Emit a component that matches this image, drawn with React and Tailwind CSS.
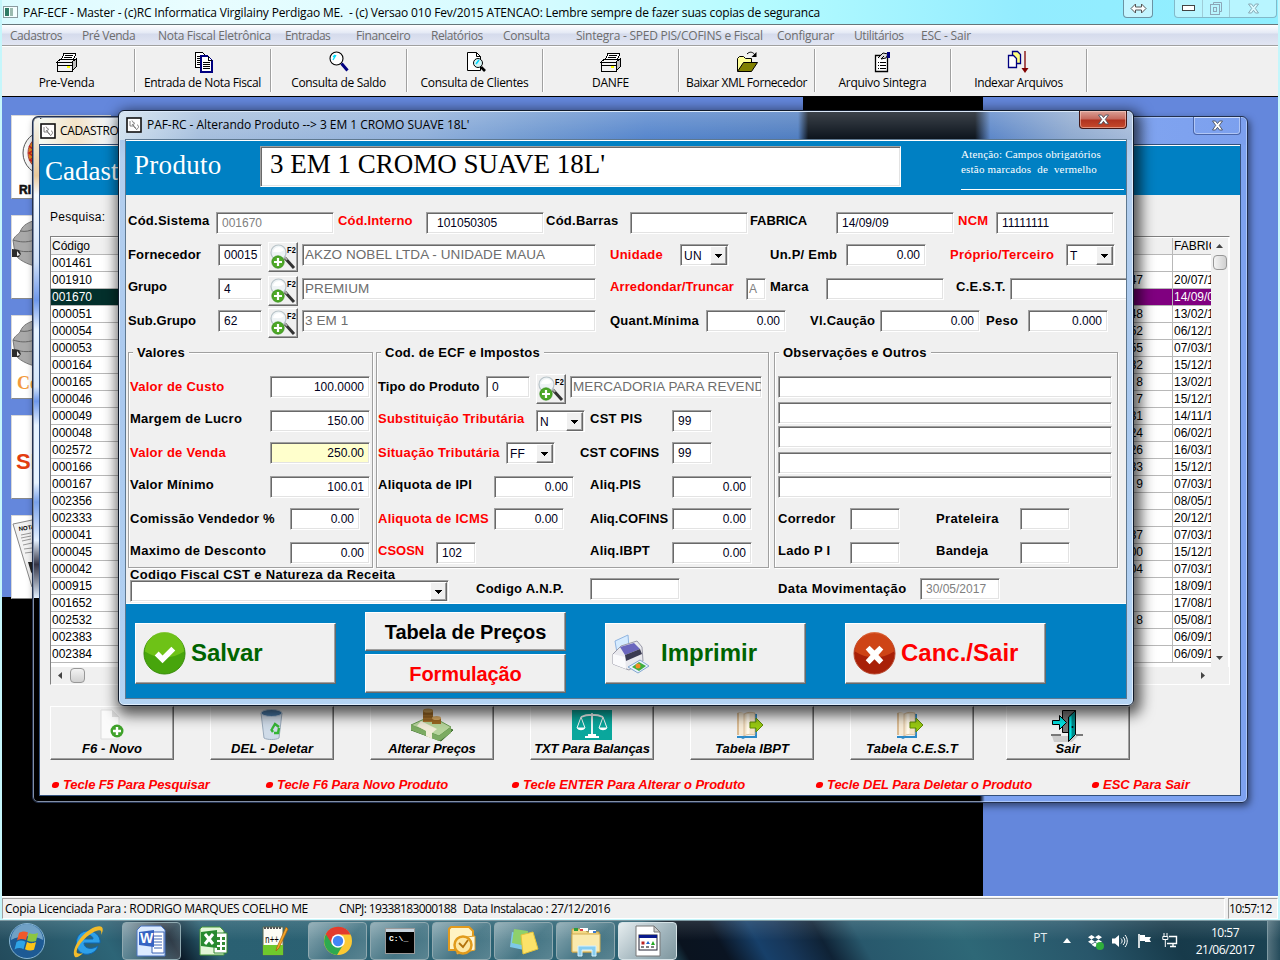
import React from "react";
import { FaDropbox } from "react-icons/fa";

const SEGOE = "font-['Open_Sans','Noto_Sans',sans-serif]";
const RAISED =
  "bg-[#f0f0f0] border border-t-white border-l-white border-r-[#696969] border-b-[#696969] shadow-[inset_-1px_-1px_0_#a0a0a0]";
const SUNKEN =
  "bg-white border border-t-[#a0a0a0] border-l-[#a0a0a0] border-r-white border-b-white shadow-[inset_1px_1px_0_#696969,inset_-1px_-1px_0_#e3e3e3]";

/* ---------- form primitives ---------- */

function Row({ className = "", children }) {
  return <div className={"flex shrink-0 items-start " + className}>{children}</div>;
}

function L({ className = "", red, children }) {
  return (
    <span
      className={
        "block h-[21px] shrink-0 whitespace-nowrap pt-px text-[13px] font-bold leading-5 " +
        (red ? "text-[#ff0000] " : "text-black ") +
        className
      }
    >
      {children}
    </span>
  );
}

function F({ className = "", children, right, off, big, yellow }) {
  return (
    <div
      className={
        "h-[22px] shrink-0 overflow-hidden whitespace-nowrap leading-5 " +
        SUNKEN +
        " " +
        (yellow ? "bg-[#ffffcc]! " : "") +
        (big ? "text-[13.5px] tracking-[0.08px] text-[#6d6d6d] pl-0.5 " : "text-[12px] tracking-normal ") +
        (right ? "pr-[5px] text-right " : big ? "" : "pl-[5px] ") +
        (off ? "text-[#808080] " : big ? "" : "text-[#000020] ") +
        className
      }
    >
      {children}
    </div>
  );
}

function Arrow() {
  return (
    <span className={"flex h-[19px] w-[17px] shrink-0 items-center justify-center " + RAISED}>
      <svg width="7" height="4" shapeRendering="crispEdges">
        <path d="M0 0h7L3.5 4z" fill="#000" />
      </svg>
    </span>
  );
}

function Select({ className = "", children }) {
  return (
    <div className={"flex h-[22px] shrink-0 justify-between p-px pl-[3px] text-[12px] leading-[21px] text-[#000020] " + SUNKEN + " " + className}>
      <span>{children}</span>
      <Arrow />
    </div>
  );
}

function Lookup({ className = "" }) {
  return (
    <div className={"relative h-[30px] w-[30px] shrink-0 " + RAISED + " " + className}>
      <svg width="28" height="28" viewBox="0 0 28 28">
        <path d="M16 15l9 10" stroke="#333" strokeWidth="3" />
        <path d="M15 13l3 4" stroke="#aaa" strokeWidth="2" />
        <circle cx="9.500" cy="9.500" r="7.500" fill="#eef3f5" stroke="#b9c4c9" strokeWidth="1.200" />
        <path d="M4 9a6 6 0 0 1 11-2c-3 3-7 2-11 2z" fill="#fff" />
        <circle cx="9" cy="19" r="6.200" fill="#4ea827" stroke="#2f8a14" strokeWidth=".7" />
        <path d="M9 15v8M5 19h8" stroke="#fff" strokeWidth="2.200" />
        <text x="18" y="10" fontSize="9" fontWeight="bold" fontFamily="Liberation Sans" textLength="9" lengthAdjust="spacingAndGlyphs">F2</text>
      </svg>
    </div>
  );
}

function Group({ className = "", title, children }) {
  return (
    <div className={"flex h-[216px] shrink-0 flex-col border border-[#a0a0a0] shadow-[inset_1px_1px_0_#fff,1px_1px_0_#fff] " + className}>
      <div className="-mt-[10px] mb-[13px] ml-1 h-5 w-fit bg-[#f0f0f0] px-1 text-[13px] font-bold leading-5 tracking-[0.25px]">{title}</div>
      {children}
    </div>
  );
}

/* ---------- toolbar pictures ---------- */

function PrinterIcon() {
  return (
    <svg width="22" height="22" viewBox="0 0 22 22" shapeRendering="crispEdges">
      <path d="M8 2h12l-3 8H5z" fill="#fff" stroke="#000" />
      <path d="M9 4h8M8 6h8M7 8h8" stroke="#000" />
      <path d="M1 11h15v9H1zM1 11l4-3h14l-3 3z" fill="#f4f4f4" stroke="#000" />
      <path d="M16 11l4-3v8l-4 4z" fill="#c0c0c0" stroke="#000" />
      <path d="M2 14h14" stroke="#000" />
      <path d="M11 16h3" stroke="#ffff00" strokeWidth="2" />
    </svg>
  );
}
function PagesIcon() {
  return (
    <svg width="22" height="22" viewBox="0 0 22 22" shapeRendering="crispEdges">
      <path d="M3 1h7l3 3v12H3z" fill="#fff" stroke="#000" />
      <path d="M5 5h4M5 7h6M5 9h6M5 11h6M5 13h6" stroke="#000" />
      <path d="M9 5h7l4 4v12H9z" fill="#fff" stroke="#000080" strokeWidth="1.300" />
      <path d="M16 5v4h4M11 11h7M11 13h7M11 15h7M11 17h7" fill="none" stroke="#000" />
    </svg>
  );
}
function GlassIcon() {
  return (
    <svg width="22" height="22" viewBox="0 0 22 22">
      <circle cx="8.500" cy="7.500" r="6.500" fill="#fff" stroke="#000" strokeWidth="1.100" />
      <path d="M5 9l3-5M7 4l-2 2" stroke="#00e0ff" strokeWidth="1.300" />
      <path d="M13.500 12.500l6 7" stroke="#000080" strokeWidth="3" />
    </svg>
  );
}
function PageGlassIcon() {
  return (
    <svg width="22" height="22" viewBox="0 0 22 22">
      <path d="M3.500 1.500h9l4 4v14h-13z" fill="#fff" stroke="#000" />
      <path d="M12.500 1.500v4h4" fill="none" stroke="#000" />
      <circle cx="14" cy="12" r="4.500" fill="#d5f4f4" stroke="#000" />
      <path d="M12 13l3-4" stroke="#00d5ff" strokeWidth="1.500" />
      <path d="M17 16l4 4" stroke="#000" strokeWidth="2.600" />
    </svg>
  );
}
function FolderIcon() {
  return (
    <svg width="24" height="22" viewBox="0 0 24 22">
      <path d="M2.500 20V7.500l2-2h4l2 2h6v4" fill="#ffff99" stroke="#000" />
      <path d="M2.500 20.500l6-9h14l-6 9z" fill="#808000" stroke="#000" />
      <path d="M12 3c3-3 6-2 8 1" fill="none" stroke="#000" />
      <path d="M21.500 1v5h-5z" fill="#000" />
    </svg>
  );
}
function ListIcon() {
  return (
    <svg width="22" height="22" viewBox="0 0 22 22">
      <path d="M3.500 4.500h12v16h-12z" fill="#fff" stroke="#000" strokeWidth="1.300" />
      <path d="M6 11.500h1M8 11.500h6M6 14.500h1M8 14.500h6M6 17.500h1M8 17.500h6" stroke="#000" />
      <path d="M6 7l5-5 5 1-2 4-5 1" fill="#ddd" stroke="#000" />
      <path d="M15 1h3v6h-3z" fill="#000080" />
      <path d="M9 8l3-3" stroke="#000" />
    </svg>
  );
}
function IndexIcon() {
  return (
    <svg width="24" height="24" viewBox="0 0 24 24">
      <path d="M5.500 1.500h5l3 3v9h-8z" fill="#ffff80" stroke="#000080" strokeWidth="1.300" />
      <path d="M1.500 5.500h5l3 3v9h-8z" fill="#fff" stroke="#000080" strokeWidth="1.300" />
      <path d="M18 1v18" stroke="#800000" strokeWidth="1.300" />
      <path d="M14.500 18h7L18 23z" fill="#800000" />
    </svg>
  );
}

const TOOLS = [
  ["Pre-Venda", PrinterIcon, "w-[133px] pr-[3px]", "tracking-[-0.25px]"],
  ["Entrada de Nota Fiscal", PagesIcon, "w-[136px]", "tracking-[-0.36px]"],
  ["Consulta de Saldo", GlassIcon, "w-[136px]", "tracking-[-0.34px]"],
  ["Consulta de Clientes", PageGlassIcon, "w-[136px]", "tracking-[-0.3px]"],
  ["DANFE", PrinterIcon, "w-[136px]", "tracking-[-0.2px]"],
  ["Baixar XML Fornecedor", FolderIcon, "w-[136px]", "tracking-[-0.43px]"],
  ["Arquivo Sintegra", ListIcon, "w-[136px]", "tracking-[-0.3px]"],
  ["Indexar Arquivos", IndexIcon, "w-[136px]", "tracking-[-0.4px]"],
];

const MENU = [
  ["Cadastros", "w-[72px] tracking-[-0.45px]"],
  ["Pré Venda", "w-[76px] tracking-[-0.45px]"],
  ["Nota Fiscal Eletrônica", "w-[127px] tracking-[-0.3px]"],
  ["Entradas", "w-[71px] tracking-[-0.55px]"],
  ["Financeiro", "w-[75px] tracking-[-0.4px]"],
  ["Relatórios", "w-[72px] tracking-[-0.45px]"],
  ["Consulta", "w-[73px] tracking-[-0.3px]"],
  ["Sintegra - SPED PIS/COFINS e Fiscal", "w-[201px] tracking-[-0.25px]"],
  ["Configurar", "w-[77px] tracking-[-0.25px]"],
  ["Utilitários", "w-[67px] tracking-[-0.4px]"],
  ["ESC - Sair", "w-[60px] tracking-[-0.22px]"],
];

function CloseX({ fill = "#fff" }) {
  return (
    <svg width="13" height="11" viewBox="0 0 13 11">
      <path d="M1.500 1h3l2 2.600L8.500 1h3L8.300 5.400l3.200 4.600h-3l-2-2.700-2 2.700h-3l3.200-4.600z" fill={fill} stroke="#4b5160" strokeWidth=".9" />
    </svg>
  );
}

function AppHeader() {
  return (
    <>
      <div className="flex h-6 shrink-0 justify-between bg-[linear-gradient(90deg,#dcfbff_0,#e9fdff_15%,#d5fbff_42%,#b4fbff_60%,#93ecff_80%,#90efff_100%)] pl-px pr-px">
        <div className="flex items-center gap-[5px]">
          <svg width="15" height="14" viewBox="0 0 15 14">
            <rect x=".5" y="1.500" width="14" height="11" fill="#f4ffff" stroke="#8a9ba0" />
            <rect x="2" y="3" width="4" height="8" fill="#2f7a64" />
            <rect x="7" y="3" width="3" height="8" fill="#9bbbb0" />
          </svg>
          <span className={"whitespace-pre pt-0.5 text-[12px] tracking-[-0.17px] text-black " + SEGOE}>
            {"PAF-ECF - Master - (c)RC Informatica Virgilainy Perdigao ME.  - (c) Versao 010 Fev/2015 ATENCAO: Lembre sempre de fazer suas copias de seguranca"}
          </span>
        </div>
        <div className="flex h-[18px]">
          <div className="mr-[21px] flex w-[30px] items-center justify-center rounded-b border border-t-0 border-[#6b93a3] bg-[#c4f5ff]">
            <svg width="17" height="11" viewBox="0 0 17 11">
              <path d="M1 5.500L5.500 1v3h6V1L16 5.500 11.500 10V7h-6v3z" fill="#fff" stroke="#555" />
            </svg>
          </div>
          <div className="flex w-[103px] rounded-b border border-t-0 border-[#82b9c9] bg-[#b8f5ff]">
            <div className="flex w-[28px] items-center justify-center border-r border-[#9fcdd8]">
              <svg width="13" height="7"><rect x=".5" y=".5" width="12" height="5" fill="#fff" stroke="#444" /></svg>
            </div>
            <div className="flex w-[27px] items-center justify-center border-r border-[#9fcdd8]">
              <svg width="12" height="13" fill="none" stroke="#8da6b8"><path d="M3.500 2.500v-2h8v9h-2" /><rect x=".5" y="2.500" width="9" height="10" /><rect x="3.500" y="5.500" width="3" height="4" /></svg>
            </div>
            <div className="flex grow items-center justify-center opacity-50"><CloseX /></div>
          </div>
        </div>
      </div>
      <div className="flex h-[21px] shrink-0 border-t border-[#66767a] bg-[linear-gradient(#fff,#e4e9f5_40%,#d5dbec_45%,#e2e6f3)] pl-2">
        {MENU.map(([t, w]) => (
          <span key={t} className={"shrink-0 whitespace-nowrap text-[12px] leading-[21px] text-[#6d6d6d] " + w + " " + SEGOE}>{t}</span>
        ))}
      </div>
      <div className="flex h-[52px] shrink-0 border-y border-t-[#a0a0a0] border-b-black bg-[#f0f0f0] pt-[3px] shadow-[inset_0_1px_0_#fff]">
        {TOOLS.map(([t, Icon, w, tr]) => (
          <div key={t} className={"flex h-[43px] shrink-0 flex-col items-center border-r border-[#a0a0a0] shadow-[1px_0_0_#fff] " + w}>
            <div className="flex h-[26px] items-center"><Icon /></div>
            <span className={"whitespace-nowrap text-[12px] leading-[18px] text-black " + SEGOE + " " + tr}>{t}</span>
          </div>
        ))}
      </div>
    </>
  );
}

/* ---------- desktop shortcuts behind the windows ---------- */

function Thumb({ children }) {
  return (
    <div className="h-[84px] w-[100px] overflow-hidden border border-[#d8d8d8] border-b-[#888] bg-white">
      <svg width="98" height="82" viewBox="0 0 98 82">{children}</svg>
    </div>
  );
}
function Hands({ word }) {
  return (
    <>
      <path d="M1 24c3-6 6-5 8-10 2-5 8-8 15-10v46C16 49 5 43 3 38z" fill="#a9a9a9" stroke="#777" />
      <path d="M1 24c7 2 12 3 22 0M2 33c7 3 12 3 20 2M8 15c6 1 9 0 14-2" stroke="#666" fill="none" />
      <path d="M0 33l7 1 2 4-2 3H0z" fill="#2c2c2c" /><path d="M5 35l3 4-3 1z" fill="#eee" />
      {word && <text x="5" y="73" fontSize="18" fontWeight="bold" fill="#f39a3c" fontFamily="Liberation Serif">Co</text>}
    </>
  );
}
function Shortcuts() {
  return (
    <div className="flex flex-col gap-4 pl-[9px] pt-[18px]">
      <Thumb>
        <circle cx="33" cy="37" r="22" fill="#f7f7f7" stroke="#555" />
        <circle cx="34" cy="37" r="18" fill="#e98a1c" stroke="#a44" />
        <path d="M17 30l5 4-5 3 5 4-4 3 5 3" fill="none" stroke="#c22" strokeWidth="1.500" />
        <text x="7" y="78" fontSize="12" fontWeight="bold" fontFamily="Liberation Sans" fill="#111" stroke="#111" strokeWidth=".6">RI</text>
      </Thumb>
      <Thumb><Hands /></Thumb>
      <Thumb><Hands word /></Thumb>
      <Thumb>
        <text x="4" y="53" fontSize="22" fontWeight="bold" fontFamily="Liberation Sans" fill="#e43d10">S<tspan fill="#444">I</tspan></text>
      </Thumb>
      <Thumb>
        <path d="M1 8l24-5v68h-5z" fill="#f2f2f2" stroke="#888" />
        <text x="7" y="15" fontSize="6" fontWeight="bold" fontFamily="Liberation Sans" transform="rotate(-8 7 15)">NOTA</text>
        <path d="M9 19l10-2M9 22l10-2M10 25l9-2M11 29l9-2M12 33l8-1M13 37l8-1" stroke="#999" />
        <path d="M16 46h9v19l-6-9z" fill="#222" />
      </Thumb>
    </div>
  );
}

/* ---------- product list window ---------- */

const ROWS = [
  ["001461", "", ""], ["001910", "47", "20/07/1"], ["001670", "", "14/09/0"], ["000051", "48", "13/02/1"],
  ["000054", "52", "06/12/1"], ["000053", "55", "07/03/1"], ["000164", "32", "15/12/1"], ["000165", "8", "13/02/1"],
  ["000046", "7", "15/12/1"], ["000049", "31", "14/11/1"], ["000048", "24", "06/02/1"], ["002572", "26", "16/03/1"],
  ["000166", "33", "15/12/1"], ["000167", "9", "07/03/1"], ["002356", "", "08/05/1"], ["002333", "", "20/12/1"],
  ["000041", "37", "07/03/1"], ["000045", "00", "15/12/1"], ["000042", "04", "07/03/1"], ["000915", "", "18/09/1"],
  ["001652", "", "17/08/1"], ["002532", "8", "05/08/1"], ["002383", "", "06/09/1"], ["002384", "", "06/09/1"],
];

function GridRow({ row, head, selected }) {
  const cell = "h-[17px] overflow-hidden whitespace-nowrap leading-4 border-b border-[#b8b8b8] ";
  const bg = head ? "bg-[#f0f0f0] " : selected ? "bg-[#800080] text-white " : "bg-white ";
  return (
    <div className="flex h-[17px] text-[12px] text-black">
      <div className={cell + "w-[90px] pl-px " + (selected ? "bg-[#03302c] text-white" : bg)}>{row[0]}</div>
      <div className={cell + "w-[1032px] border-r pr-[29px] text-right " + bg}>{row[1]}</div>
      <div className={cell + "w-[38px] pl-px " + bg}>{row[2]}</div>
    </div>
  );
}

function NewIcon() {
  return (
    <svg width="34" height="34" viewBox="0 0 34 34">
      <path d="M6 2h11l7 7v22H6z" fill="#fbfbfb" stroke="#ddd" />
      <path d="M17 2v7h7z" fill="#ddd" />
      <circle cx="22" cy="23" r="6.500" fill="#3fa22a" />
      <path d="M22 19v8M18 23h8" stroke="#fff" strokeWidth="2.400" />
    </svg>
  );
}
function TrashIcon() {
  return (
    <svg width="34" height="34" viewBox="0 0 34 34">
      <path d="M6 5h21l-3 25c-3 2-12 2-15 0z" fill="#cfdbe8" stroke="#9aaabb" />
      <ellipse cx="16.500" cy="5" rx="10.500" ry="3.500" fill="#4778a6" stroke="#b7c9dc" />
      <path d="M17 21l3-5 4 3M24 20l-1 5h-4M18 24l-2-3" fill="none" stroke="#35b535" strokeWidth="2.400" />
    </svg>
  );
}
function MoneyIcon() {
  return (
    <svg width="42" height="36" viewBox="0 0 42 36">
      <path d="M0 24l20-9 22 9-12 11z" fill="#5d8f48" stroke="#3c6b2e" />
      <path d="M0 19l20-9 20 11-12 9z" fill="#b7d49c" stroke="#6a9c52" />
      <path d="M0 19v5l28 11v-5zM40 21v6l-12 8v-5z" fill="#7cab62" />
      <path d="M10 15l16 8-5 4v6l-6-3v-5l-9-5z" fill="#f1ecd8" />
      <path d="M12 4h10v12H12z" fill="#a9742c" /><ellipse cx="17" cy="4.500" rx="5" ry="2" fill="#d9a95c" />
      <path d="M12 8h10M12 11h10M12 14h10" stroke="#7c4f17" strokeWidth=".7" />
      <path d="M21 12h9v6h-9z" fill="#9c6822" /><ellipse cx="25.500" cy="12" rx="4.500" ry="2" fill="#dcae66" />
    </svg>
  );
}
function ScaleIcon() {
  return (
    <svg width="40" height="32" viewBox="0 0 40 32">
      <rect width="40" height="30" y="0" fill="#0aa79c" />
      <path d="M20 3v22M9 7c6-3 16-3 22 0M13 27h14M16 25h8" stroke="#fff" strokeWidth="1.800" fill="none" />
      <path d="M9 7L5 18h8zM31 7l-4 11h8z" fill="none" stroke="#fff" />
      <path d="M5 18c1 3 7 3 8 0zM27 18c1 3 7 3 8 0z" fill="#fff" />
    </svg>
  );
}
function BookIcon() {
  return (
    <svg width="34" height="34" viewBox="0 0 34 34">
      <path d="M2 28h20v2H10l-2 1-2-1H2z" fill="#2c8ac8" />
      <path d="M21 6v23" stroke="#2c8ac8" strokeWidth="2" />
      <path d="M2 5c3-1 5-1 7 1v22c-2-2-4-1-7-1z" fill="#d9bb94" />
      <path d="M4 5c2-1 3-1 5 1v22c-2-2-3-1-5-1z" fill="#f6ead6" />
      <path d="M9 6c3-2 7-2 11-1v22c-4-1-8-1-11 1z" fill="#f3e3c9" stroke="#c9a67a" strokeWidth=".6" />
      <path d="M13 6v20" stroke="#fff8ea" strokeWidth="3" />
      <path d="M15 14h6v-4l7 7-7 7v-4h-6z" fill="#9acb12" stroke="#5f8a05" />
    </svg>
  );
}
function DoorIcon() {
  return (
    <svg width="34" height="34" viewBox="0 0 34 34">
      <path d="M1 28h26l-6 6H3z" fill="#ccc" />
      <path d="M0 27h10M25 27h7" stroke="#000" />
      <path d="M11.500 2.500h13v22h-13z" fill="#777" stroke="#000" />
      <path d="M17.500 9l7-6.500v24l-7 7z" fill="#008b8b" stroke="#000" />
      <path d="M18.500 9.500l2-2v22l-2 2.500z" fill="#00e5e5" />
      <circle cx="21.500" cy="19" r="1" fill="#000" />
      <path d="M1.500 12.500h7v-5l7 7-7 7v-5h-7z" fill="#00e5e5" stroke="#000" />
    </svg>
  );
}

const ACTIONS = [
  ["F6 - Novo", NewIcon, "", "tracking-[0.1px]"],
  ["DEL - Deletar", TrashIcon, "ml-9", "tracking-[0.05px]"],
  ["Alterar Preços", MoneyIcon, "ml-9", "tracking-[-0.1px]"],
  ["TXT Para Balanças", ScaleIcon, "ml-9", "tracking-[-0.08px]"],
  ["Tabela IBPT", BookIcon, "ml-9", "tracking-[0px]"],
  ["Tabela C.E.S.T", BookIcon, "ml-9", "tracking-[0.15px]"],
  ["Sair", DoorIcon, "ml-8", "tracking-[0.1px]"],
];
const HINTS = [
  ["Tecle F5 Para Pesquisar", "w-[214px] tracking-[-0.1px]"],
  ["Tecle F6 Para Novo Produto", "w-[246px] tracking-[-0.07px]"],
  ["Tecle ENTER Para Alterar o Produto", "w-[304px]"],
  ["Tecle DEL Para Deletar o Produto", "w-[276px] tracking-[-0.05px]"],
  ["ESC Para Sair", "w-[110px]"],
];

function WindowIcon() {
  return (
    <svg width="16" height="16" viewBox="0 0 16 16">
      <rect x="1" y="1" width="14" height="14" fill="#fff" stroke="#111" strokeWidth="1.600" />
      <path d="M4 4v5h3M6 3.500l2 3M9 6c-2 0-2 5 1 5M11 8c2 0 2 3 0 4M6 7l5 6" fill="none" stroke="#666" strokeWidth=".8" />
    </svg>
  );
}

function ListWindow() {
  return (
    <div className="absolute left-8 top-[19px] flex h-[687px] w-[1216px] flex-col rounded-md border border-[#22304e] bg-[linear-gradient(90deg,#000_0,#000_78%,#7da2f0_78.4%)] px-1.5 pb-1.5 shadow-[inset_0_0_0_1px_rgba(200,220,255,.65),2px_3px_7px_rgba(0,0,0,.5)]">
      <div className="absolute left-px top-px h-[480px] w-[6px] rounded-tl bg-[linear-gradient(#f4f6f0,#e9c99c_12%,#f5fbff_16%,#cfe0f8_30%,#6e98ec_38%,#e7f3ff_44%,#d5e6fa_56%,#6e98ec_59%,#e7f3ff_64%,#e7f3ff_76%,#79a1ea_80%,#e3f0ff_88%,#334_93%,#e3f0ff)]" />
      <div className="absolute left-[6px] right-px top-px h-[27px] rounded-t bg-[linear-gradient(90deg,#f5fbf5_0,#f3e3c8_3%,#f1f7fd_6%,#86aaf3_75%,#7ca0ee)]" />
      <div className="relative flex h-[27px] shrink-0 items-start justify-between">
        <div className="flex h-full items-center gap-1 pl-px">
          <WindowIcon />
          <span className={"text-[12px] tracking-[-0.35px] text-black " + SEGOE}>CADASTRO</span>
        </div>
        <div className="flex h-[18px] w-[48px] items-center justify-center rounded-b border border-t-0 border-[#4a65a8] shadow-[inset_0_0_0_1px_rgba(255,255,255,.4)]"><CloseX /></div>
      </div>
      <div className="relative flex grow flex-col border border-[#33507c] bg-[#f0f0f0]">
        <div className="h-[50px] shrink-0 border-t border-white bg-[#0080c3] pl-[5px] pt-[9px] font-['Liberation_Serif',serif] text-[27px] leading-8 text-white">Cadastro</div>
        <div className="h-[41px] shrink-0 pl-[10px] pt-[13px] text-[12px] leading-[18px] tracking-[0.3px]">Pesquisa:</div>
        <div className="ml-[10px] flex h-[449px] w-[1180px] shrink-0 flex-col overflow-hidden border border-l-[#808080] border-t-[#808080] border-b-white border-r-white bg-white pt-px">
          <div className="flex h-[430px]">
            <div className="w-[1160px]">
              <GridRow head row={["Código", "", "FABRIC"]} />
              {ROWS.map((r) => <GridRow key={r[0]} row={r} selected={r[0] === "001670"} />)}
            </div>
            <div className="flex w-[17px] flex-col items-center bg-[#f0f0f0]">
              <svg width="17" height="17"><path d="M5 10h7L8.500 6z" fill="#444" /></svg>
              <div className="h-[15px] w-[14px] rounded-sm border border-[#979797] bg-[linear-gradient(90deg,#f3f3f3,#d0d0d0)]" />
              <div className="grow" />
              <svg width="17" height="17"><path d="M5 6h7l-3.500 4z" fill="#444" /></svg>
            </div>
          </div>
          <div className="flex h-[17px] w-[1178px] items-center bg-[#f0f0f0]">
            <svg width="19" height="17"><path d="M11 5v7L7 8.500z" fill="#444" /></svg>
            <div className="h-[15px] w-[15px] rounded-sm border border-[#979797] bg-[linear-gradient(#f3f3f3,#d0d0d0)]" />
            <div className="grow" />
            <svg width="34" height="17"><path d="M6 5v7l4-3.500z" fill="#444" /></svg>
          </div>
        </div>
        <div className="mt-[21px] flex h-[54px] shrink-0 pl-[10px]">
          {ACTIONS.map(([t, Icon, m, tr]) => (
            <div key={t} className={"flex w-[124px] shrink-0 flex-col items-center justify-end pb-[2px] " + RAISED + " " + m}>
              <div className="flex h-[33px] items-end"><Icon /></div>
              <span className={"-mt-px whitespace-nowrap text-[13px] font-bold italic leading-4 text-black " + tr}>{t}</span>
            </div>
          ))}
        </div>
        <div className="flex pl-[12px] pt-4">
          {HINTS.map(([t, w]) => (
            <div key={t} className={"flex shrink-0 items-center gap-1 whitespace-nowrap text-[13px] font-bold italic leading-[18px] text-[#ff0000] " + w}>
              <span className="h-1.5 w-[7px] -skew-x-12 rounded-full bg-[#ff0000]" />
              {t}
            </div>
          ))}
        </div>
      </div>
    </div>
  );
}

/* ---------- product dialog ---------- */

function PhotoPrinter() {
  return (
    <svg width="38" height="42" viewBox="0 0 38 42">
      <path d="M4 8l13-6 1 13-12 5z" fill="#d5ebff" stroke="#8fb4e0" />
      <path d="M2 21l8-8 16-5 5 6 1 14-14 9-16-6z" fill="#e9e9ee" stroke="#9a9aa8" />
      <path d="M9 14l14-4 6 6-15 6z" fill="#6b66bd" />
      <path d="M14 22l15-6 2 5-16 7z" fill="#3b3b52" />
      <path d="M2 21l12 3 1 12L2 31z" fill="#fafafc" />
      <path d="M17 34l12-7 9 6-11 7z" fill="#e6f3ff" stroke="#83a7cf" />
      <path d="M21 34l7-5 7 4-7 5z" fill="#3fae3f" /><circle cx="27" cy="33" r="2.500" fill="#f28b25" />
    </svg>
  );
}

function BigButton({ className = "", children }) {
  return <div className={"flex shrink-0 items-center " + RAISED + " " + className}>{children}</div>;
}

function Dialog() {
  return (
    <div className="absolute left-[118px] top-[13px] flex h-[596px] w-[1016px] flex-col rounded-md border border-[#101a2a] bg-[linear-gradient(#9dbbe2_0,#b4cfee_8%,#a9c8ee_50%,#b4d3f2)] px-1.5 pb-1.5 shadow-[inset_0_0_0_1px_rgba(235,245,255,.8),3px_5px_14px_4px_rgba(0,0,0,.65)]">
      <div className="absolute left-px right-px top-px h-7 rounded-t bg-[linear-gradient(rgba(255,255,255,.2),rgba(255,255,255,0)),linear-gradient(90deg,#cfe0ee_0,#a5bedd_8%,#8fafda_30%,#6d97d0_42%,#5585cc_52%,#4f7dc0_67%,#0b131c_68%,#0b131c_84.500%,#5b86c8_86%,#8ea9cf_94%,#a4bad9)]" />
      <div className="relative flex h-7 shrink-0 justify-between">
        <div className="flex items-center gap-[5px] pl-px">
          <WindowIcon />
          <span className={"whitespace-nowrap text-[12px] leading-4 tracking-[-0.05px] text-black " + SEGOE}>{"PAF-RC - Alterando Produto --> 3 EM 1 CROMO SUAVE 18L'"}</span>
        </div>
        <div className="flex h-[18px] w-[48px] items-center justify-center rounded-b border border-t-0 border-[#421818] bg-[linear-gradient(#dba197,#c5675a_48%,#b0321f_52%,#c54a2c)] shadow-[inset_0_0_0_1px_rgba(255,220,210,.5)]"><CloseX /></div>
      </div>

      <div className="relative flex grow flex-col overflow-hidden border border-[#5e7890] bg-[#f0f0f0] text-black">
        <div className="flex h-[55px] shrink-0 border-t border-white bg-[#0080c3] font-['Liberation_Serif',serif] text-white">
          <div className="w-[134px] shrink-0 pl-[8px] pt-[7px] text-[27px] leading-[34px] tracking-[0.3px]">Produto</div>
          <div className={"mt-[5px] h-[41px] w-[641px] shrink-0 pl-[9px] text-[27px] leading-[34px] text-black " + SUNKEN}>3 EM 1 CROMO SUAVE 18L'</div>
          <div className="ml-[60px] mt-1.5 h-[43px] w-[163px] border-b border-white whitespace-pre text-[11px] leading-[15px] tracking-[0.2px]">
            {"Atenção: Campos obrigatórios\nestão marcados  de  vermelho"}
          </div>
        </div>

        <div className="flex grow flex-col pl-px tracking-[0.25px]">
          <Row className="mt-[17px] h-8 pl-px [&>span]:-mt-0.5">
            <L className="w-[88px]">Cód.Sistema</L><F off className="w-[118px]">001670</F>
            <L red className="ml-1 w-[88px] tracking-[0.15px]">Cód.Interno</L><F className="w-[118px] pl-[10px]!">101050305</F>
            <L className="ml-0.5 w-[84px]">Cód.Barras</L><F className="w-[118px]" />
            <L className="ml-0.5 w-[86px] tracking-[-0.1px]">FABRICA</L><F className="w-[118px]">14/09/09</F>
            <L red className="ml-1 w-[38px]">NCM</L><F className="w-[118px]">11111111</F>
          </Row>
          <Row className="h-[34px] pl-px">
            <L className="w-[90px] tracking-[0.15px]">Fornecedor</L><F className="w-[44px]">00015</F>
            <Lookup className="-mt-0.5 ml-1.5" /><F big className="ml-1 w-[294px]">AKZO NOBEL LTDA - UNIDADE MAUA</F>
            <L red className="ml-3.5 w-[70px]">Unidade</L><Select className="w-[49px]">UN</Select>
            <L className="ml-[41px] w-[76px]">Un.P/ Emb</L><F right className="w-[80px]">0.00</F>
            <L red className="ml-6 w-[116px]">Próprio/Terceiro</L><Select className="w-[49px]">T</Select>
          </Row>
          <Row className="h-8 pl-px [&>span]:-mt-0.5">
            <L className="w-[90px] tracking-[0px]">Grupo</L><F className="w-[44px]">4</F>
            <Lookup className="-mt-0.5 ml-1.5" /><F big className="ml-1 w-[294px]">PREMIUM</F>
            <L red className="ml-3.5 w-[136px] tracking-[0.1px]">Arredondar/Truncar</L><F off className="w-5 pl-0.5!">A</F>
            <L className="ml-1 w-[56px]">Marca</L><F className="w-[118px]" />
            <L className="ml-3 w-[54px]">C.E.S.T.</L><F className="w-[140px]" />
          </Row>
          <Row className="h-[42px] pl-px">
            <L className="w-[90px] tracking-[0.1px]">Sub.Grupo</L><F className="w-[44px]">62</F>
            <Lookup className="-mt-0.5 ml-1.5" /><F big className="ml-1 w-[294px]">3 EM 1</F>
            <L className="ml-3.5 w-[96px]">Quant.Mínima</L><F right className="w-[80px]">0.00</F>
            <L className="ml-6 w-[70px]">Vl.Caução</L><F right className="w-[100px]">0.00</F>
            <L className="ml-1.5 w-[42px]">Peso</L><F right className="w-[80px]">0.000</F>
          </Row>

          <div className="flex shrink-0 pl-px">
            <Group title="Valores" className="w-[245px]">
              <Row className="h-[34px] pl-px"><L red className="w-[140px]">Valor de Custo</L><F right className="w-[100px]">100.0000</F></Row>
              <Row className="h-8 pl-px [&>span]:-mt-0.5"><L className="w-[140px]">Margem de Lucro</L><F right className="w-[100px]">150.00</F></Row>
              <Row className="h-[34px] pl-px"><L red className="w-[140px]">Valor de Venda</L><F right yellow className="w-[100px]">250.00</F></Row>
              <Row className="h-8 pl-px [&>span]:-mt-0.5"><L className="w-[140px]">Valor Mínimo</L><F right className="w-[100px]">100.01</F></Row>
              <Row className="h-[34px] pl-px"><L className="w-[160px]">Comissão Vendedor %</L><F right className="w-[70px]">0.00</F></Row>
              <Row className="pl-px [&>span]:-mt-0.5"><L className="w-[160px] tracking-[0.35px]">Maximo de Desconto</L><F right className="w-[80px]">0.00</F></Row>
            </Group>
            <Group title="Cod. de ECF e Impostos" className="ml-[3px] w-[393px]">
              <Row className="h-[34px] pl-px"><L className="w-[108px] tracking-[0.1px]">Tipo do Produto</L><F className="w-[44px]">0</F><Lookup className="-mt-0.5 ml-1.5" /><F big className="ml-1 w-[192px]">MERCADORIA PARA REVENDA</F></Row>
              <Row className="h-8 pl-px [&>span]:-mt-0.5"><L red className="w-[158px]">Substituição Tributária</L><Select className="w-[49px]">N</Select><L className="ml-[5px] w-[82px]">CST PIS</L><F className="w-10">99</F></Row>
              <Row className="h-[34px] pl-px"><L red className="w-[128px]">Situação Tributária</L><Select className="w-[49px]">FF</Select><L className="ml-[25px] w-[92px] tracking-[0.05px]">CST COFINS</L><F className="w-10">99</F></Row>
              <Row className="h-8 pl-px [&>span]:-mt-0.5"><L className="w-[116px]">Aliquota de IPI</L><F right className="w-20">0.00</F><L className="ml-4 w-[82px]">Aliq.PIS</L><F right className="w-20">0.00</F></Row>
              <Row className="h-[34px] pl-px"><L red className="w-[116px]">Aliquota de ICMS</L><F right className="w-[70px]">0.00</F><L className="ml-[26px] w-[82px] tracking-[0.08px]">Aliq.COFINS</L><F right className="w-20">0.00</F></Row>
              <Row className="pl-px [&>span]:-mt-0.5"><L red className="w-[58px] tracking-[0px]">CSOSN</L><F className="w-10">102</F><L className="ml-[114px] w-[82px]">Aliq.IBPT</L><F right className="w-20">0.00</F></Row>
            </Group>
            <Group title="Observações e Outros" className="ml-[5px] w-[344px]">
              <div className="flex h-[132px] shrink-0 flex-col pl-[3px]">
                <F className="mb-1 w-[334px]" /><F className="mb-0.5 w-[334px]" /><F className="mb-1 w-[334px]" /><F className="mb-0.5 w-[334px]" /><F className="w-[334px]" />
              </div>
              <Row className="h-[34px] pl-[3px]"><L className="w-[72px]">Corredor</L><F className="w-[50px]" /><L className="ml-9 w-[84px] tracking-[0.35px]">Prateleira</L><F className="w-[50px]" /></Row>
              <Row className="pl-[3px] [&>span]:-mt-0.5"><L className="w-[72px]">Lado P I</L><F className="w-[50px]" /><L className="ml-9 w-[84px]">Bandeja</L><F className="w-[50px]" /></Row>
            </Group>
          </div>

          <div className="flex h-[34px] shrink-0 pl-[3px]">
            <div className="flex w-[319px] shrink-0 flex-col">
              <div className="h-3 overflow-hidden whitespace-nowrap text-[13px] font-bold leading-[13px] tracking-[0.32px]">Codigo Fiscal CST e Natureza da Receita</div>
              <Select className="w-[319px]" />
            </div>
            <Row className="pt-[10px]">
              <L className="ml-[27px] w-[114px]">Codigo A.N.P.</L><F className="w-[90px]" />
              <L className="ml-[98px] w-[142px] tracking-[0.38px]">Data Movimentação</L><F off className="w-20">30/05/2017</F>
            </Row>
          </div>
        </div>

        <div className="flex h-[95px] shrink-0 border-t border-white bg-[#0080c3] pl-[9px]">
          <BigButton className="mt-[19px] h-[61px] w-[201px] pl-[7px]">
            <svg width="43" height="43" viewBox="0 0 44 44">
              <circle cx="22" cy="22" r="21" fill="#47a50c" stroke="#378b09" />
              <path d="M2 20a20 20 0 0 1 40 0c-12 8-28 8-40 0z" fill="#7fcf1d" opacity=".7" />
              <path d="M12 24l4-4 4 4 9-9 4 4-13 13z" fill="#fff" />
            </svg>
            <span className="-mt-0.5 ml-[5px] text-[24px] font-bold text-[#006400] tracking-[-0.1px]">Salvar</span>
          </BigButton>
          <div className="ml-[29px] mt-[8px] flex w-[201px] shrink-0 flex-col gap-[3px] text-[20px] font-bold tracking-[-0.1px]">
            <BigButton className="h-[39px] justify-center">Tabela de Preços</BigButton>
            <BigButton className="h-[39px] justify-center text-[#ff0000]">Formulação</BigButton>
          </div>
          <BigButton className="ml-[39px] mt-[19px] h-[61px] w-[201px] pl-[5px]">
            <PhotoPrinter />
            <span className="-mt-0.5 ml-3 text-[24px] font-bold text-[#006400]">Imprimir</span>
          </BigButton>
          <BigButton className="ml-[39px] mt-[19px] h-[61px] w-[201px] pl-[7px]">
            <svg width="43" height="43" viewBox="0 0 44 44">
              <circle cx="22" cy="22" r="21" fill="#a82008" stroke="#b84a30" />
              <path d="M2 20a20 20 0 0 1 40 0c-12 8-28 8-40 0z" fill="#e2571e" opacity=".65" />
              <path d="M13 18l4-4 5 5 5-5 4 4-5 5.500 5 5.500-4 4-5-5-5 5-4-4 5-5.500z" fill="#fff" />
            </svg>
            <span className="-mt-0.5 ml-[5px] text-[24px] font-bold text-[#ff0000]">Canc./Sair</span>
          </BigButton>
        </div>
      </div>
    </div>
  );
}

/* ---------- taskbar ---------- */

function Task({ className = "", open, active, children }) {
  return (
    <div
      className={
        "flex h-[38px] shrink-0 items-center justify-center rounded-sm " +
        (active
          ? "border border-[#d5e2e6] bg-[linear-gradient(135deg,#e6edef,#9fb3bb_60%,#7e979f)] "
          : open
          ? "border border-[#8fa9b0] bg-[linear-gradient(135deg,rgba(255,255,255,.45),rgba(255,255,255,.12)_60%,rgba(255,255,255,.22))] "
          : "") +
        className
      }
    >
      {children}
    </div>
  );
}

function Taskbar() {
  return (
    <div className="flex h-10 shrink-0 items-center border-t border-[#7f9aa3] bg-[linear-gradient(rgba(255,255,255,.12),rgba(255,255,255,0)_50%),linear-gradient(60deg,#234b5c_0,#2d6577_9%,#29576a_11%,#0b1a28_14%,#2a6072_17%,#2c6374_44%,#2b6071_51%,#0a131f_53%,#0a1422_56%,#17406a_59%,#17375a_61%,#0f2235_64%,#28586c_67%,#2e6877_75%,#28566a_84%,#173a4a_91%,#1b4454_100%)]">
      <Task className="w-[54px]">
        <svg width="38" height="38" viewBox="0 0 38 38">
          <circle cx="19" cy="19" r="17.500" fill="#1d5a94" stroke="#86b5d3" />
          <path d="M3 18a16 16 0 0 1 32 0c-9-5-23-5-32 0z" fill="#8cb9d6" opacity=".75" />
          <path d="M11 11c3-2 6-2 9-.5L18 18c-3-1.500-6-1.500-9 .5z" fill="#f0582a" />
          <path d="M21 11c3 1.500 6 1.300 9 0l-2 8c-3 1.300-6 1-9-.5z" fill="#8cc63f" />
          <path d="M8.500 20c3-2 6-1.700 9-.3l-2 7.500c-3-1.700-6-1.400-9 .3z" fill="#2fa4e7" />
          <path d="M19 20c3 1.500 5 1.500 9 .3l-2 7.500c-3 1.200-6 1-9-.5z" fill="#fcc419" />
        </svg>
      </Task>
      <Task className="ml-2 w-[52px]">
        <svg width="36" height="36" viewBox="0 0 36 36">
          <path d="M30 20H14c0 6 8 7 14 3-2 7-9 9-14 8C3 28 4 10 16 8c9-1 15 5 14 12zM14 16h9c0-5-9-5-9 0z" fill="#2ea0e8" stroke="#0d67b4" />
          <path d="M5 34C0 27 12 9 25 4c9-3 9 3 6 8 1-4 0-6-5-4C16 12 5 25 7 30c2 1 4 1 6 0-3 3-6 5-8 4z" fill="#f2bb2b" />
        </svg>
      </Task>
      <Task open className="ml-2 w-[59px]">
        <svg width="34" height="34" viewBox="0 0 34 34">
          <path d="M6 2h20l4 4v26H2V6z" fill="#dcebff" stroke="#4a74c2" />
          <path d="M17 8h12v21H17z" fill="#fff" stroke="#3c65b5" /><path d="M19 12h8M19 15h8M19 18h8M19 21h8M19 24h8" stroke="#3c65b5" />
          <path d="M4 8l15-2v17L4 21z" fill="#3663c2" />
          <text x="5" y="19" fontSize="14" fontWeight="bold" fontFamily="Liberation Sans" fill="#fff">W</text>
        </svg>
      </Task>
      <Task className="ml-0.5 w-[60px]">
        <svg width="34" height="34" viewBox="0 0 34 34">
          <path d="M6 3h18l4 4v24H4V5z" fill="#e3f7d8" stroke="#4a9b3a" />
          <path d="M18 9h13v20H18z" fill="#fff" stroke="#338a33" /><path d="M21 13h3v3h-3zM26 13h3v3h-3zM21 18h3v3h-3zM26 18h3v3h-3zM21 23h3v3h-3zM26 23h3v3h-3z" fill="#338a33" />
          <path d="M5 8l16-2v18L5 22z" fill="#278a2f" />
          <path d="M9 10l8 10M17 10L9 20" stroke="#fff" strokeWidth="3" />
        </svg>
      </Task>
      <Task className="ml-px w-[60px]">
        <svg width="30" height="34" viewBox="0 0 30 34">
          <path d="M4 3h20v28H4z" fill="#fdfdf4" stroke="#5a6a50" />
          <path d="M4 21h20v10H4z" fill="#6fc92c" />
          <path d="M5 4h18" stroke="#555" strokeWidth="2" strokeDasharray="2 1" />
          <text x="6" y="19" fontSize="10" fontFamily="Liberation Mono" textLength="14" lengthAdjust="spacingAndGlyphs">n++</text>
          <path d="M27 3l-9 20-1 4 3-3 9-19z" fill="#f4a62a" stroke="#a35d0d" strokeWidth=".7" />
        </svg>
      </Task>
      <Task open className="ml-1 w-[59px]">
        <svg width="32" height="32" viewBox="0 0 32 32">
          <circle cx="16" cy="16" r="14" fill="#fcc934" />
          <path d="M4 9a14 14 0 0 0 11 21l6-10z" fill="#2da94f" />
          <path d="M3.800 9A14 14 0 0 1 28.500 9.500H16L10 19z" fill="#e33b2e" />
          <circle cx="16" cy="16" r="6.800" fill="#fff" /><circle cx="16" cy="16" r="5.200" fill="#4285f4" />
        </svg>
      </Task>
      <Task open className="ml-[3px] w-[59px]">
        <svg width="30" height="28" viewBox="0 0 30 28">
          <rect x=".5" y="1.500" width="29" height="25" fill="#000" stroke="#999" />
          <path d="M1 3.500h28" stroke="#c7d3dc" strokeWidth="3" />
          <text x="4" y="14" fontSize="8" fontWeight="bold" fontFamily="Liberation Mono" fill="#fff">C:\_</text>
        </svg>
      </Task>
      <Task open className="ml-[3px] w-[59px]">
        <svg width="34" height="34" viewBox="0 0 34 34">
          <path d="M6 3h18l4 4v19H4V5z" fill="#fff3c4" stroke="#e29a1d" strokeWidth="2" />
          <path d="M12 14l18-2v14l-18 4z" fill="#fff7d8" stroke="#e0a02c" />
          <circle cx="18" cy="21" r="8.500" fill="#fde7a3" stroke="#e19b1c" strokeWidth="2.500" />
          <path d="M14 19l4 4 5-7" fill="none" stroke="#b3720b" strokeWidth="1.800" />
        </svg>
      </Task>
      <Task open className="ml-[3px] w-[59px]">
        <svg width="34" height="30" viewBox="0 0 34 30">
          <path d="M5 6l-2 15 14 3 3-15z" fill="#7ec8e8" /><path d="M7 3l14 2-2 15-14-3z" fill="#8ed06b" />
          <path d="M14 9l12-3 5 17-15 5z" fill="#fbe26a" stroke="#e5c33a" />
        </svg>
      </Task>
      <Task open className="ml-[3px] w-[59px]">
        <svg width="34" height="34" viewBox="0 0 34 34">
          <path d="M3 5h13l2 3h12v20H3z" fill="#f3da86" stroke="#c49b3b" />
          <path d="M5 4h4v3H5z" fill="#2c9a3c" /><path d="M11 4h8v3h-8z" fill="#fff" /><path d="M11 5h3v2h-3z" fill="#d44" /><path d="M20 6h7v3h-7z" fill="#fff" /><path d="M24 7h3v2h-3z" fill="#3a7ad0" />
          <path d="M3 10h28v18H3z" fill="#faeaad" stroke="#d2ad53" />
          <path d="M9 32V22h18v10h-4v-6H13v6z" fill="#86cdf0" stroke="#d6f1ff" />
        </svg>
      </Task>
      <Task active className="ml-[3px] w-[59px]">
        <svg width="30" height="34" viewBox="0 0 30 34">
          <path d="M3 2h18l6 6v24H3z" fill="#fff" stroke="#777" /><path d="M21 2v6h6z" fill="#ccc" stroke="#777" />
          <rect x="6" y="11" width="18" height="15" fill="#fff" stroke="#223" /><path d="M6 12.500h18" stroke="#0a1a8c" strokeWidth="3" />
          <path d="M8.500 17.500h3v3h-3z" fill="#b22" /><path d="M13 20l2-3 2 3z" fill="#26c" /><path d="M18 21l2-4 2 4z" fill="#2a2" />
          <path d="M8 23h3M13 23h3M18 23h3" stroke="#000" />
        </svg>
      </Task>
      <div className={"ml-auto flex h-full items-center text-[12px] text-white " + SEGOE}>
        <span className="mb-[5px] mr-[16px] text-[12px] tracking-[-0.1px] text-[#e6eef0]">PT</span>
        <svg width="8" height="5" className="mr-[17px]"><path d="M0 5h8L4 0z" fill="#fff" /></svg>
        <span className="relative mr-2.5 text-[14px]">
          <FaDropbox />
          <span className="absolute -bottom-0.5 -right-0.5 h-2 w-2 rounded-full bg-[#2fae3b]" />
        </span>
        <svg width="16" height="14" viewBox="0 0 16 14" className="mr-2.5">
          <path d="M0 4.500h3L7 1v12L3 9.500H0z" fill="#fff" /><path d="M9 4.500c1.500 1.500 1.500 3.500 0 5M11 3c2.500 2.500 2.500 5.500 0 8M13 1c3 3.500 3 8.500 0 12" fill="none" stroke="#fff" />
        </svg>
        <svg width="14" height="14" viewBox="0 0 14 14" className="mr-2.5">
          <path d="M1 0v14" stroke="#fff" strokeWidth="1.600" /><path d="M2 1h5v2h6l-1.500 2.500L13 8H7V7H2z" fill="#fff" />
        </svg>
        <svg width="16" height="15" viewBox="0 0 16 15" fill="none" stroke="#fff" className="mr-[18px]">
          <path d="M7 3.500h7.500v7H5M8 13.500h6M11 10.500v3" strokeWidth="1.400" /><path d="M2 0v3M5 0v3M.8 3.500h5v3h-5zM3.300 7v7" />
        </svg>
        <div className="mr-[13px] flex w-[58px] flex-col items-center leading-[17px] tracking-[-0.5px]"><span>10:57</span><span>21/06/2017</span></div>
        <div className="h-full w-[13px] border-l border-[#7f9aa3] bg-[linear-gradient(90deg,rgba(255,255,255,.25),rgba(255,255,255,.05))]" />
      </div>
    </div>
  );
}

export default function App() {
  return (
    <div className="flex h-[960px] w-[1280px] flex-col overflow-hidden bg-[#c5f6fb] font-['Liberation_Sans',sans-serif]">
      <div className="flex h-[920px] shrink-0 flex-col pl-0.5 pr-0.5">
        <AppHeader />
        <div className="h-[799px] shrink-0 bg-[#6487dc]">
          <div className="h-full w-full bg-[linear-gradient(#000,#000),linear-gradient(#000,#000)] bg-[length:180px_100%,981px_299px] bg-[position:801px_0,0_500px] bg-no-repeat">
            <Shortcuts />
          </div>
        </div>
        <div className={"flex h-[23px] shrink-0 gap-[3px] border-t border-white bg-[#f0f0f0] pt-px text-[12px] leading-[19px] text-black " + SEGOE}>
          <div className="flex grow whitespace-pre border border-b-white border-l-[#a0a0a0] border-r-white border-t-[#a0a0a0] pl-[2px]">
            <span className="w-[334px] tracking-[-0.3px]">Copia Licenciada Para : RODRIGO MARQUES COELHO ME</span>
            <span className="w-[124px] tracking-[-0.6px]">CNPJ: 19338183000188</span>
            <span className="tracking-[-0.43px]">Data Instalacao : 27/12/2016</span>
          </div>
          <div className="w-[50px] border border-b-white border-l-[#a0a0a0] border-r-white border-t-[#a0a0a0] tracking-[-0.6px]">10:57:12</div>
        </div>
      </div>
      <Taskbar />
      <div className="absolute left-0 top-[97px] h-0 w-0">
        <ListWindow />
        <Dialog />
      </div>
    </div>
  );
}
